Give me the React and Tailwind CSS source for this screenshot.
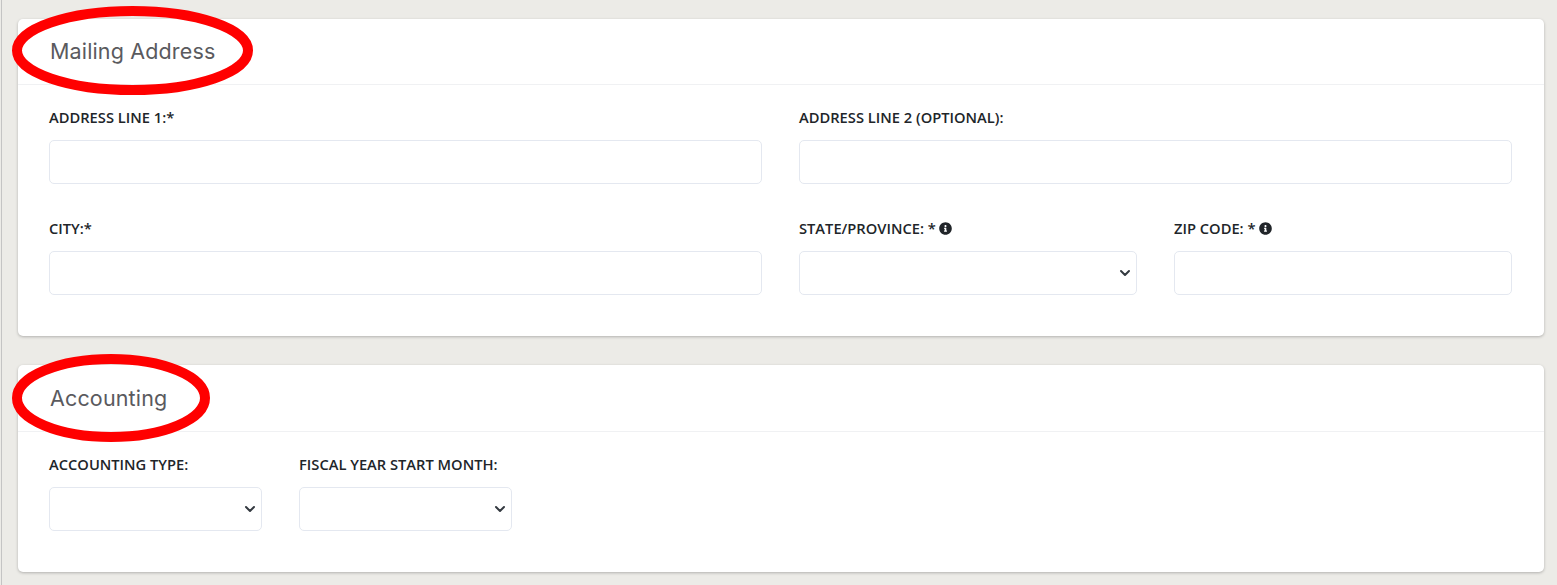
import { ChevronDown } from 'lucide-react'
import { FaInfoCircle } from 'react-icons/fa'

function Label({ text, info }) {
  return (
    <label className="flex h-[22px] items-center gap-[3px] pb-[2px] text-[14.7px] font-[550] whitespace-nowrap text-[#212529] uppercase">
      {text}
      {info && <FaInfoCircle size={13} className="text-[#212529]" />}
    </label>
  )
}

function TextField({ label, info, className = '' }) {
  return (
    <div className={`flex flex-col gap-[11px] ${className}`}>
      <Label text={label} info={info} />
      <input className="h-[44px] w-full rounded-[5px] border border-[#e4e8f0] bg-white outline-none" />
    </div>
  )
}

function SelectField({ label, info, className = '' }) {
  return (
    <div className={`flex flex-col gap-[11px] ${className}`}>
      <Label text={label} info={info} />
      <div className="relative">
        <select className="h-[44px] w-full appearance-none rounded-[5px] border border-[#e4e8f0] bg-white outline-none" />
        <ChevronDown size={16} strokeWidth={3} className="absolute top-[14px] right-[4px] text-[#343a40]" />
      </div>
    </div>
  )
}

function Oval({ width, height, className }) {
  return (
    <svg width={width} height={height} className={`absolute left-[-6px] ${className}`}>
      <ellipse
        cx={width / 2}
        cy={height / 2}
        rx={width / 2 - 5}
        ry={height / 2 - 5}
        fill="none"
        stroke="#ff0000"
        strokeWidth="10"
      />
    </svg>
  )
}

function Card({ title, headerClass, ovalClass, oval, className = '', children }) {
  return (
    <section className={`relative rounded-[5px] bg-white shadow-[0_1px_3px_rgba(0,0,0,0.25)] ${className}`}>
      <div className={`flex items-center border-b border-[#f0f1f3] pl-[32px] font-['Inter',sans-serif] text-[21.5px] tracking-[0.15px] text-[#5a5a5e] ${headerClass}`}>
        {title}
      </div>
      <Oval width={oval[0]} height={oval[1]} className={ovalClass} />
      {children}
    </section>
  )
}

export default function App() {
  return (
    <div className="bg-[#ecebe7] pl-px">
      <div className="flex h-[585px] flex-col gap-[29px] overflow-hidden border-l border-[#c4c4c4] bg-[#ecebe7] pt-[19px] pr-[13px] pl-[16px] font-['Open_Sans',sans-serif]">
        <Card title="Mailing Address" headerClass="h-[66px]" oval={[241, 89]} ovalClass="top-[-13px]" className="h-[317px]">
          <div className="grid grid-cols-2 gap-x-[37px] gap-y-[22px] pt-[22px] pr-[32px] pl-[31px]">
            <TextField label="Address Line 1:*" />
            <TextField label="Address Line 2 (Optional):" />
            <TextField label="City:*" className="mt-[12px]" />
            <div className="mt-[12px] grid grid-cols-2 gap-x-[37px]">
              <SelectField label="State/Province: *" info />
              <TextField label="Zip Code: *" info />
            </div>
          </div>
        </Card>
        <Card title="Accounting" headerClass="h-[67px]" oval={[198, 88]} ovalClass="top-[-11px]" className="h-[207px]">
          <div className="flex gap-[37px] pt-[22px] pr-[32px] pl-[31px]">
            <SelectField label="Accounting Type:" className="w-[213px]" />
            <SelectField label="Fiscal Year Start Month:" className="w-[213px]" />
          </div>
        </Card>
      </div>
    </div>
  )
}
